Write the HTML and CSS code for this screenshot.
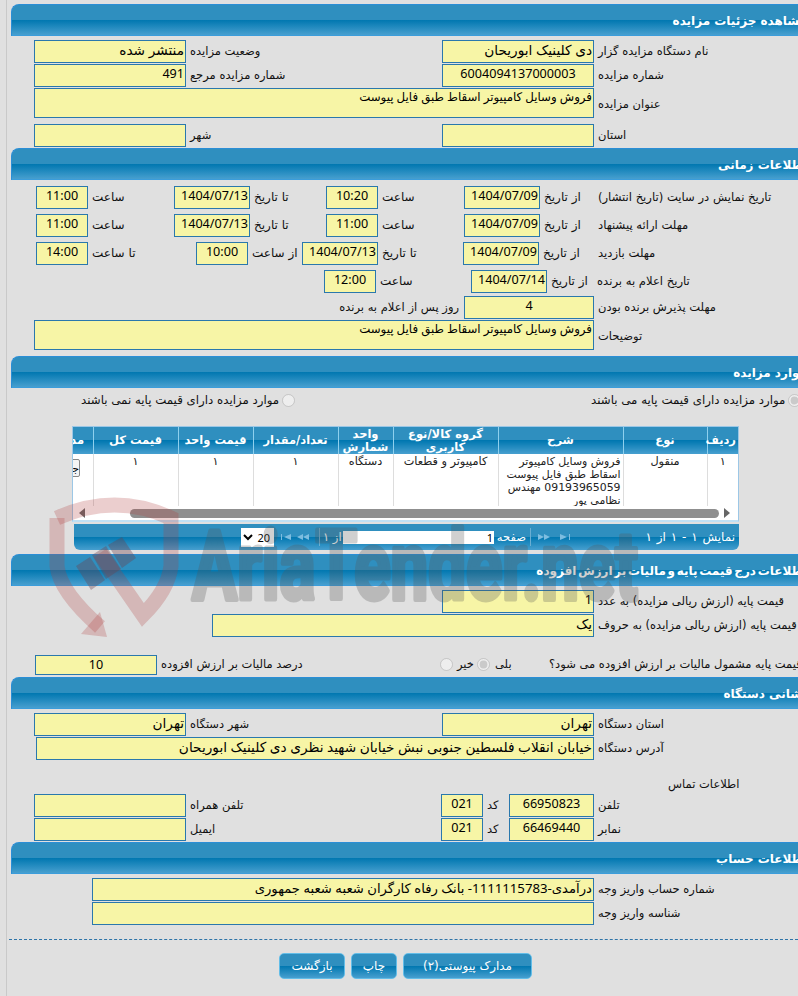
FILE: index.html
```html
<!DOCTYPE html>
<html lang="fa">
<head>
<meta charset="utf-8">
<title>مشاهده جزئیات مزایده</title>
<link rel="stylesheet" href="styles.css">
</head>
<body>
<div class="page">
  <div class="wrap">
    <h2 class="bar">مشاهده جزئیات مزایده</h2>
    <div class="row two">
      <div class="fld fa">منتشر شده</div><span class="lbl">وضعیت مزایده</span>
      <div class="fld fa">دی کلینیک ابوریحان</div><span class="lbl">نام دستگاه مزایده گزار</span>
    </div>
    <div class="row two">
      <div class="fld">491</div><span class="lbl">شماره مزایده مرجع</span>
      <div class="fld ctr">6004094137000003</div><span class="lbl">شماره مزایده</span>
    </div>
    <div class="row area">
      <div class="fld top">فروش وسایل کامپیوتر اسقاط طبق فایل پیوست</div><span class="lbl">عنوان مزایده</span>
    </div>
    <div class="row two">
      <div class="fld"></div><span class="lbl">شهر</span>
      <div class="fld"></div><span class="lbl">استان</span>
    </div>

    <h2 class="bar">اطلاعات زمانی</h2>
    <div class="row time first">
      <div class="fld ctr">11:00</div><span class="lbl">ساعت</span>
      <div class="fld">1404/07/13</div><span class="lbl">تا تاریخ</span>
      <div class="fld ctr">10:20</div><span class="lbl">ساعت</span>
      <div class="fld">1404/07/09</div><span class="lbl">از تاریخ</span>
      <span class="lbl">تاریخ نمایش در سایت (تاریخ انتشار)</span>
    </div>
    <div class="row time">
      <div class="fld ctr">11:00</div><span class="lbl">ساعت</span>
      <div class="fld">1404/07/13</div><span class="lbl">تا تاریخ</span>
      <div class="fld ctr">11:00</div><span class="lbl">ساعت</span>
      <div class="fld">1404/07/09</div><span class="lbl">از تاریخ</span>
      <span class="lbl">مهلت ارائه پیشنهاد</span>
    </div>
    <div class="row visit">
      <div class="fld ctr">14:00</div><span class="lbl">تا ساعت</span>
      <div class="fld ctr">10:00</div><span class="lbl">از ساعت</span>
      <div class="fld">1404/07/13</div><span class="lbl">تا تاریخ</span>
      <div class="fld">1404/07/09</div><span class="lbl">از تاریخ</span>
      <span class="lbl">مهلت بازدید</span>
    </div>
    <div class="row announce">
      <div class="fld ctr">12:00</div><span class="lbl">ساعت</span>
      <div class="fld">1404/07/14</div><span class="lbl">از تاریخ</span>
      <span class="lbl">تاریخ اعلام به برنده</span>
    </div>
    <div class="row accept">
      <span class="lbl end">روز پس از اعلام به برنده</span>
      <div class="fld ctr">4</div>
      <span class="lbl">مهلت پذیرش برنده بودن</span>
    </div>
    <div class="row area">
      <div class="fld top">فروش وسایل کامپیوتر اسقاط طبق فایل پیوست</div><span class="lbl">توضیحات</span>
    </div>

    <h2 class="bar">موارد مزایده</h2>
    <div class="radios">
      <span class="lbl">موارد مزایده دارای قیمت پایه نمی باشند</span>
      <input class="rad" type="radio" name="base" disabled>
      <span class="lbl wide">موارد مزایده دارای قیمت پایه می باشند</span>
      <input class="rad" type="radio" name="base" checked disabled>
    </div>
    <div class="grid">
      <div class="tbl-clip">
        <table class="tbl">
          <thead>
            <tr>
              <th class="c1">ردیف</th><th class="c2">نوع</th><th class="c3">شرح</th><th class="c4">گروه کالا/نوع کاربری</th><th class="c5">واحد شمارش</th><th class="c6">تعداد/مقدار</th><th class="c7">قیمت واحد</th><th class="c8">قیمت کل</th><th class="c9">مدارک</th>
            </tr>
          </thead>
          <tbody>
            <tr>
              <td>۱</td><td>منقول</td><td class="dcell"><div class="desc">فروش وسایل کامپیوتر اسقاط طبق فایل پیوست 09193965059 مهندس نظامی پور</div></td><td>کامپیوتر و قطعات</td><td>دستگاه</td><td>۱</td><td>۱</td><td>۱</td><td><button class="mini" type="button">جزئیات</button></td>
            </tr>
          </tbody>
        </table>
      </div>
      <div class="hscroll">
        <svg class="arr" width="8" height="12" viewBox="0 0 8 12"><path d="M7 1v10L1 6z" fill="#666"/></svg>
        <div class="thumb"></div>
        <svg class="arr" width="8" height="12" viewBox="0 0 8 12"><path d="M1 1v10l6-5z" fill="#666"/></svg>
      </div>
      <div class="pager">
        <select class="psize" dir="rtl"><option>20</option></select>
        <span class="nav">
          <svg width="12" height="8" viewBox="0 0 12 8"><path d="M1 1v6h1V1zM11 1v6L4 4z" fill="#7dbde0"/></svg>
          <svg width="14" height="8" viewBox="0 0 14 8"><path d="M7 1v6L1 4zM13 1v6L7 4z" fill="#7dbde0"/></svg>
        </span>
        <span class="sep"></span>
        <span class="ptext of">از ۱</span>
        <div class="pinput">1</div>
        <span class="ptext pg">صفحه</span>
        <span class="sep"></span>
        <span class="nav nav2">
          <svg width="14" height="8" viewBox="0 0 14 8"><path d="M1 1v6l6-3zM7 1v6l6-3z" fill="#7dbde0"/></svg>
          <svg width="12" height="8" viewBox="0 0 12 8"><path d="M1 1v6l7-3zM10 1v6h1V1z" fill="#7dbde0"/></svg>
        </span>
        <span class="ptext count">نمایش ۱ - ۱ از ۱</span>
      </div>
    </div>

    <h2 class="bar tight">اطلاعات درج قیمت پایه و مالیات بر ارزش افزوده</h2>
    <div class="row single">
      <div class="fld">1</div><span class="lbl">قیمت پایه (ارزش ریالی مزایده) به عدد</span>
    </div>
    <div class="row words">
      <div class="fld fa">یک</div><span class="lbl">قیمت پایه (ارزش ریالی مزایده) به حروف</span>
    </div>
    <div class="row tax">
      <div class="fld ctr">10</div>
      <span class="lbl">درصد مالیات بر ارزش افزوده</span>
      <input class="rad" type="radio" name="vat" disabled>
      <span class="lbl">خیر</span>
      <input class="rad" type="radio" name="vat" checked disabled>
      <span class="lbl yes">بلی</span>
      <span class="lbl q">قیمت پایه مشمول مالیات بر ارزش افزوده می شود؟</span>
    </div>

    <h2 class="bar">نشانی دستگاه</h2>
    <div class="row two">
      <div class="fld fa">تهران</div><span class="lbl">شهر دستگاه</span>
      <div class="fld fa">تهران</div><span class="lbl">استان دستگاه</span>
    </div>
    <div class="row addr">
      <div class="fld fa">خیابان انقلاب فلسطین جنوبی نبش خیابان شهید نظری دی کلینیک ابوریحان</div><span class="lbl">آدرس دستگاه</span>
    </div>
    <div class="contact"><span class="lbl">اطلاعات تماس</span></div>
    <div class="row phone">
      <div class="fld"></div><span class="lbl">تلفن همراه</span>
      <div class="fld ctr">021</div><span class="lbl">کد</span>
      <div class="fld ctr">66950823</div><span class="lbl">تلفن</span>
    </div>
    <div class="row phone">
      <div class="fld"></div><span class="lbl">ایمیل</span>
      <div class="fld ctr">021</div><span class="lbl">کد</span>
      <div class="fld ctr">66469440</div><span class="lbl">نمابر</span>
    </div>

    <h2 class="bar">اطلاعات حساب</h2>
    <div class="row acct">
      <div class="fld mix">درآمدی-1111115783- بانک رفاه کارگران شعبه شعبه جمهوری</div><span class="lbl">شماره حساب واریز وجه</span>
    </div>
    <div class="row acct">
      <div class="fld"></div><span class="lbl">شناسه واریز وجه</span>
    </div>
  </div>
  <div class="foot">
    <button class="btn b1" type="button">بازگشت</button>
    <button class="btn b2" type="button">چاپ</button>
    <button class="btn b3" type="button">مدارک پیوستی(۲)</button>
  </div>
  <svg class="mark" width="798" height="996" viewBox="0 0 798 996">
    <g fill="none" stroke="#b03a3a" stroke-opacity=".25" stroke-width="15">
      <path d="M57 518Q115 492 171 518V566Q168 590 143 615L100 553"/>
      <path d="M57 518V566Q60 592 100 627"/>
    </g>
    <path d="M81 634L107 637L100 612Z" fill="#b03a3a" fill-opacity=".25"/>
    <g fill="#70404a" fill-opacity=".36">
      <path d="M76 566L90 557L105 580L91 590Z"/>
      <path d="M92 555L106 546L121 569L106 579Z"/>
      <path d="M108 545L122 537L136 558L122 568Z"/>
    </g>
    <text class="mark-text" x="192" y="599" textLength="446" lengthAdjust="spacingAndGlyphs">AriaTender.net</text>
  </svg>
</div>
</body>
</html>
```
FILE: styles.css
```css
* { box-sizing: border-box; }
html, body { margin: 0; padding: 0; background: #e0e0e0; }
body { font-family: "Noto Sans", "DejaVu Sans", sans-serif; font-size: 12px; color: #000; }

.page {
  position: relative;
  width: 798px;
  height: 996px;
  overflow: hidden;
  background: #e0e0e0;
  border-left: 1px solid #e0e0e0;
  background-image: linear-gradient(#c9c9c9, #c9c9c9);
  background-size: 1px 100%;
  background-position: 5px 0;
  background-repeat: no-repeat;
}
.wrap { width: 830px; padding-top: 4px; }

.bar {
  margin: 0 0 4px 10px;
  height: 32px;
  padding: 0 24px 0 0;
  direction: rtl;
  font: bold 12px/32px "DejaVu Sans", sans-serif;
  color: #fff;
  border: 1px solid #2b8ed6;
  border-right: 0;
  border-bottom-color: #3b9ddb;
  border-radius: 8px 0 0 0;
  background: linear-gradient(#2f8fbf 0, #2f8fbf 50%, #0077b0 50%, #479fcf 100%);
}
.bar.tight { word-spacing: -2.5px; }

.row { display: grid; height: 20px; margin-bottom: 4px; align-items: stretch; }
.two { grid-template-columns: 152px 256px 152px max-content; padding-left: 33px; }
.area { grid-template-columns: 560px max-content; padding-left: 33px; height: 30px; margin-bottom: 6px; }
.area .lbl { align-self: center; padding-top: 2px; }
.first { margin-top: 6px; }
.time { grid-template-columns: 52px 86px 76px 76px 52px 86px 76px 58px max-content; padding-left: 35px; margin-bottom: 8px; }
.visit { grid-template-columns: 52px 108px 52px 54px 76px 85px 76px 59px max-content; padding-left: 35px; margin-bottom: 8px; }
.announce { grid-template-columns: 52px 95px 76px 50px max-content; padding-left: 323px; margin-bottom: 6px; }
.accept { grid-template-columns: 463px 130px max-content; margin-bottom: 4px; }
.single { grid-template-columns: 152px max-content; padding-left: 441px; }
.words { grid-template-columns: 382px max-content; padding-left: 211px; margin-bottom: 19px; }
.tax { grid-template-columns: 122px 283px 13px 24px 13px 59px max-content; padding-left: 34px; margin-bottom: 4px; align-items: center; }
.addr { grid-template-columns: 558px max-content; padding-left: 35px; }
.contact { display: flex; height: 33px; padding: 12px 0 0 663px; }
.phone { grid-template-columns: 152px 255px 42px 26px 85px max-content; padding-left: 33px; }
.acct { grid-template-columns: 502px max-content; padding-left: 91px; }

.fld {
  height: 100%;
  min-width: 0;
  border: 1px solid #2a78ad;
  background: #f7f5a6;
  direction: rtl;
  text-align: right;
  padding: 0 1px;
  font: 12.6px/18px "Noto Sans", "DejaVu Sans", sans-serif;
  white-space: nowrap;
  overflow: hidden;
}
.fld.ctr { text-align: center; }
.fld.fa { font-size: 13.7px; }
.fld.mix { font-size: 13.2px; }
.fld.top { font-size: 11.8px; line-height: 15px; }

.lbl {
  direction: rtl;
  text-align: left;
  white-space: nowrap;
  padding-left: 4px;
  font: 11.5px/23px "DejaVu Sans", sans-serif;
  color: #111;
}
.time .lbl, .visit .lbl, .announce .lbl { font-size: 12px; }
.time .lbl:last-child, .visit .lbl:last-child, .announce .lbl:last-child { padding-left: 0; font-size: 11.6px; }
.lbl.end { text-align: right; padding-right: 5px; padding-left: 0; }
.lbl.yes { padding-left: 5px; }
.lbl.q { padding-left: 0; }
.tax .fld { height: 20px; }

.rad { margin: 0; width: 13px; height: 13px; }
.radios {
  display: grid;
  grid-template-columns: 201px 13px 493px 13px;
  padding-left: 80px;
  height: 16px;
  margin: 0 0 18px;
  align-items: center;
}
.radios .lbl { padding-left: 0; line-height: 16px; font-size: 11.8px; }
.radios .lbl.wide { padding-left: 296px; }

.grid { width: 667px; margin: 0 0 4px 71px; }
.tbl-clip {
  direction: rtl;
  overflow: hidden;
  border: 1px solid #9cc7e6;
  border-bottom: 0;
  height: 80px;
  background: #fff;
}
.tbl {
  direction: rtl;
  border-collapse: collapse;
  table-layout: fixed;
  width: 699px;
  font: 11.3px/13px "DejaVu Sans", sans-serif;
}
.c1 { width: 31px; } .c2 { width: 84px; } .c3 { width: 125px; } .c4 { width: 105px; }
.c5 { width: 55px; } .c6 { width: 85px; } .c7 { width: 75px; } .c8 { width: 85px; } .c9 { width: 54px; }
.tbl th {
  height: 27px;
  padding: 0 2px;
  color: #fff;
  font: bold 11.5px/13px "DejaVu Sans", sans-serif;
  border-left: 1px solid #8fd0ee;
  background: linear-gradient(#2f8fbf 0, #2f8fbf 50%, #0077b0 50%, #479fcf 100%);
}
.tbl td {
  height: 52px;
  padding: 1px 3px 0;
  vertical-align: top;
  text-align: center;
  color: #222;
  border-left: 1px solid #ddd;
  border-bottom: 1px solid #ddd;
  overflow: hidden;
}
.tbl td.dcell { padding: 1px 2px 0 0; }
.desc { height: 51px; text-align: right; overflow: hidden; font-size: 10.9px; }
.mini {
  width: 28px;
  height: 18px;
  margin: 4px 0 0;
  padding: 0;
  border: 1px solid #888;
  border-radius: 2px;
  background: #f4f4f4;
  font: 11px "DejaVu Sans", sans-serif;
  white-space: nowrap;
  overflow: hidden;
}
.hscroll {
  display: flex;
  align-items: center;
  height: 16px;
  padding: 0 5px;
  background: #fff;
  border-left: 1px solid #9cc7e6;
  border-right: 1px solid #9cc7e6;
  border-bottom: 2px solid #bfe0f4;
}
.thumb { flex: none; width: 589px; height: 9px; margin: 0 4px 0 44px; background: #8f8f8f; border-radius: 5px; }
.arr { flex: none; }

.pager {
  display: flex;
  align-items: center;
  height: 26px;
  margin: 2px 0 0 2px;
  padding-left: 167px;
  border-radius: 0 0 6px 6px;
  background: linear-gradient(#2f8fbf 0, #2f8fbf 50%, #0077b0 50%, #479fcf 100%);
  color: #fff;
}
.psize {
  flex: none;
  width: 33px;
  height: 19px;
  border: 0;
  padding: 0;
  background: #fff;
  font: 11px "Noto Sans", sans-serif;
  color: #000;
}
.nav { display: flex; flex: none; gap: 4px; width: 45px; padding-left: 6px; }
.nav2 { width: 48px; padding-left: 6px; gap: 8px; }
.sep { flex: none; width: 1px; height: 18px; background: #6aaed2; }
.ptext { flex: none; direction: rtl; font: 11.5px "DejaVu Sans", sans-serif; white-space: nowrap; }
.of { width: 20px; margin-left: 3px; text-align: left; }
.pinput {
  flex: none;
  width: 151px;
  height: 13px;
  background: #fff;
  color: #000;
  text-align: right;
  font: 11px/13px "Noto Sans", sans-serif;
  padding-right: 1px;
}
.pg { margin: 0 4px; width: 28px; }
.count { margin-left: 56px; width: 100px; text-align: right; font-size: 12px; word-spacing: 1px; }

.foot {
  margin: 17px 0 0 8px;
  padding: 13px 0 0 270px;
  border-top: 1px dashed #2e74a8;
  display: flex;
  gap: 6px;
  height: 40px;
}
.btn {
  height: 26px;
  padding: 0;
  border: 1px solid #62bde8;
  border-radius: 5px;
  color: #fff;
  font: 12px/22px "DejaVu Sans", sans-serif;
  background: linear-gradient(#2f8fbf 0, #2f8fbf 50%, #0077b0 50%, #479fcf 100%);
}
.b1 { width: 66px; } .b2 { width: 46px; } .b3 { width: 129px; }

.mark { position: absolute; left: -1px; top: 0; pointer-events: none; }
.mark-text {
  font: 700 96px "Roboto", sans-serif;
  fill: #555;
  stroke: #555;
  stroke-width: 5px;
  stroke-linejoin: round;
  opacity: .27;
}
```
